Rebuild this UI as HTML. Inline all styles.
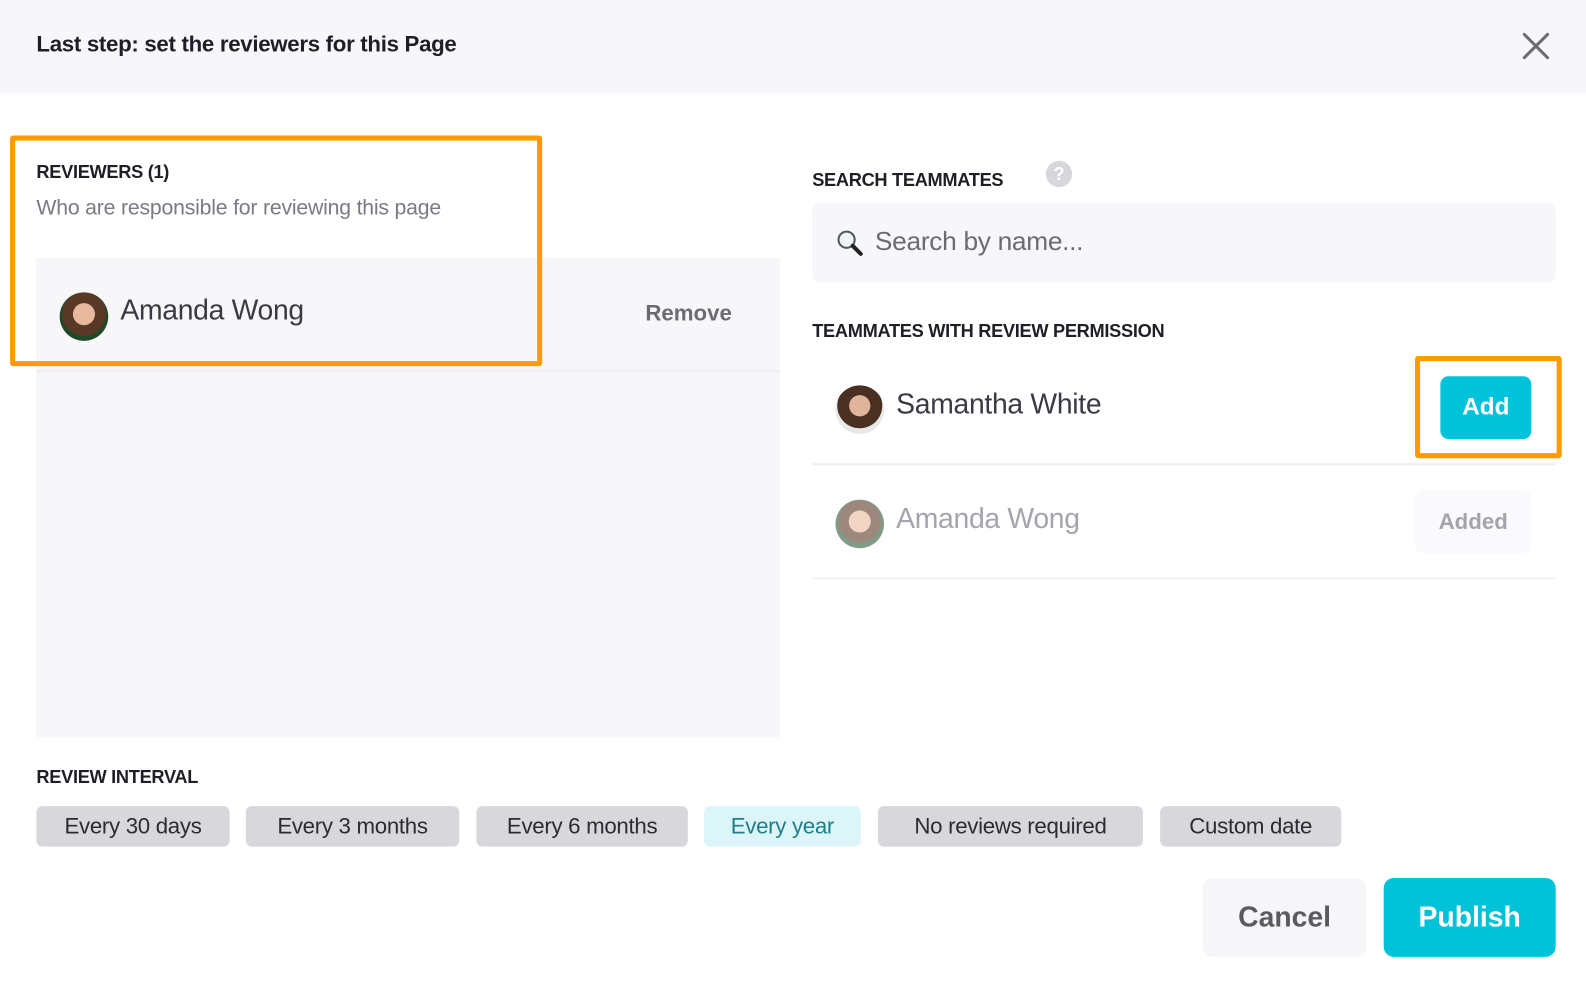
<!DOCTYPE html>
<html><head><meta charset="utf-8"><style>
*{margin:0;padding:0;box-sizing:border-box}
body{width:1586px;height:994px;background:#fff;font-family:"Liberation Sans",sans-serif;position:relative;overflow:hidden;color:#2b2b33}
#w{position:absolute;left:0;top:0;width:1568px;height:983px;transform:scale(1.01148);transform-origin:0 0}
.a{position:absolute}
.h{font-weight:bold;font-size:18px;color:#1e1e26;letter-spacing:-0.3px}
.pill{position:absolute;top:797px;height:40px;border-radius:6px;background:#d7d7dc;font-size:22px;line-height:40px;text-align:center;color:#2b2b33;letter-spacing:-0.3px}
.av{position:absolute;width:48px;height:48px;border-radius:50%;overflow:hidden}
.ctr{display:flex;align-items:center;justify-content:center}
</style></head><body><div id="w">
<div class="a" style="left:0;top:0;width:1568px;height:92px;background:#f7f7fb"></div>
<div class="a" style="left:36px;top:31px;font-size:22px;font-weight:bold;color:#1e1e26;letter-spacing:-0.3px">Last step: set the reviewers for this Page</div>
<svg class="a" style="left:1505px;top:32px" width="27" height="27" viewBox="0 0 27 27"><path d="M2 2L25 25M25 2L2 25" stroke="#6b6b73" stroke-width="3" stroke-linecap="round"/></svg>

<div class="a" style="left:36px;top:255px;width:735px;height:474px;background:#f7f7fa"></div>
<div class="a" style="left:36px;top:366px;width:735px;height:2px;background:#eeeef2"></div>
<div class="a h" style="left:36px;top:160px">REVIEWERS (1)</div>
<div class="a" style="left:36px;top:194px;font-size:21px;color:#7a7a85;letter-spacing:-0.2px">Who are responsible for reviewing this page</div>
<div class="av" style="left:59px;top:289px;background:radial-gradient(circle at 50% 45%,#e8b89c 0 30%,#5a3826 31% 60%,#1f4a2a 61%)"></div>
<div class="a" style="left:119px;top:291px;font-size:28px;color:#3a3a44;letter-spacing:-0.3px">Amanda Wong</div>
<div class="a" style="left:638px;top:297px;font-size:22px;font-weight:bold;color:#6b6b73">Remove</div>
<div class="a" style="left:10px;top:134px;width:526px;height:228px;border:5px solid #ff9b00;border-radius:3px"></div>

<div class="a h" style="left:803px;top:168px">SEARCH TEAMMATES</div>
<div class="a ctr" style="left:1034px;top:159px;width:26px;height:26px;border-radius:50%;background:#d6d6dc;color:#fff;font-weight:bold;font-size:18px">?</div>
<div class="a" style="left:803px;top:200px;width:735px;height:80px;border-radius:8px;background:#f7f7fb"></div>
<svg class="a" style="left:826px;top:226px" width="28" height="28" viewBox="0 0 28 28"><circle cx="11" cy="11" r="8" fill="#eef3f8" stroke="#555" stroke-width="2"/><path d="M17 17L25 25" stroke="#222" stroke-width="4" stroke-linecap="round"/></svg>
<div class="a" style="left:865px;top:223px;font-size:26px;color:#6b6b73;letter-spacing:-0.3px">Search by name...</div>

<div class="a h" style="left:803px;top:317px">TEAMMATES WITH REVIEW PERMISSION</div>
<div class="av" style="left:826px;top:381px;background:radial-gradient(circle at 50% 42%,#e0b49a 0 28%,#4a3022 29% 60%,#e8e8e6 61%)"></div>
<div class="a" style="left:886px;top:384px;font-size:28px;color:#3a3a44;letter-spacing:-0.3px">Samantha White</div>
<div class="a ctr" style="left:1424px;top:372px;width:90px;height:62px;border-radius:8px;background:#00c3da;color:#fff;font-size:24px;font-weight:bold">Add</div>
<div class="a" style="left:1399px;top:352px;width:145px;height:101px;border:5px solid #ff9b00;border-radius:3px"></div>
<div class="a" style="left:803px;top:458px;width:735px;height:2px;background:#eeeef2"></div>
<div class="av" style="left:826px;top:494px;opacity:.6;background:radial-gradient(circle at 50% 45%,#e8b89c 0 30%,#5a3826 31% 58%,#2d5a36 59%)"></div>
<div class="a" style="left:886px;top:497px;font-size:28px;color:#a4a4ac;letter-spacing:-0.3px">Amanda Wong</div>
<div class="a ctr" style="left:1399px;top:485px;width:115px;height:62px;border-radius:8px;background:#fafafc;color:#a4a4ac;font-size:22px;font-weight:bold">Added</div>
<div class="a" style="left:803px;top:571px;width:735px;height:2px;background:#f2f2f5"></div>

<div class="a h" style="left:36px;top:758px">REVIEW INTERVAL</div>
<div class="pill" style="left:36px;width:191px">Every 30 days</div>
<div class="pill" style="left:243px;width:211px">Every 3 months</div>
<div class="pill" style="left:471px;width:209px">Every 6 months</div>
<div class="pill" style="left:696px;width:155px;background:#dbf5f9;color:#1f7f88">Every year</div>
<div class="pill" style="left:868px;width:262px">No reviews required</div>
<div class="pill" style="left:1147px;width:179px">Custom date</div>

<div class="a ctr" style="left:1189px;top:868px;width:162px;height:78px;border-radius:10px;background:#f6f6f9;color:#5a5a63;font-size:28px;font-weight:bold">Cancel</div>
<div class="a ctr" style="left:1368px;top:868px;width:170px;height:78px;border-radius:10px;background:#00c3da;color:#fff;font-size:28px;font-weight:bold">Publish</div>
</div></body></html>
